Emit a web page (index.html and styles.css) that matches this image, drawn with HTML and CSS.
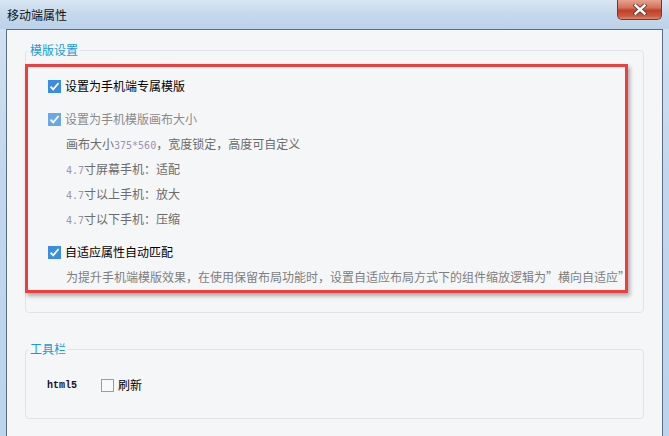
FILE: index.html
```html
<!DOCTYPE html>
<html lang="zh-CN">
<head>
<meta charset="utf-8">
<title>移动端属性</title>
<link rel="stylesheet" href="styles.css">
</head>
<body>
<div class="window">
  <div class="titlebar">
    <span class="title">移动端属性</span>
    <span class="close">
      <svg width="14" height="11" viewBox="0 0 14 11">
        <path d="M2.5 1.5 L11.5 9.5 M11.5 1.5 L2.5 9.5" stroke="#5a3a36" stroke-width="4.2" stroke-linecap="square" fill="none"/>
        <path d="M2.5 1.5 L11.5 9.5 M11.5 1.5 L2.5 9.5" stroke="#ffffff" stroke-width="2.4" stroke-linecap="square" fill="none"/>
      </svg>
    </span>
  </div>
  <div class="client">
    <div class="group g1">
      <div class="legend">模版设置</div>
      <div class="row first">
        <span class="cb on"><svg width="13" height="13" viewBox="0 0 13 13"><path d="M2.6 6.6 L5.2 9.4 L10.6 3" stroke="#fff" stroke-width="1.8" fill="none"/></svg></span>
        <span class="lbl">设置为手机端专属模版</span>
      </div>
      <div class="row gap dim">
        <span class="cb on soft"><svg width="13" height="13" viewBox="0 0 13 13"><path d="M2.6 6.6 L5.2 9.4 L10.6 3" stroke="#fff" stroke-width="1.8" fill="none"/></svg></span>
        <span class="lbl">设置为手机模版画布大小</span>
      </div>
      <div class="desc">画布大小<span class="num">375*560</span>，宽度锁定，高度可自定义</div>
      <div class="desc"><span class="num">4.7</span>寸屏幕手机：适配</div>
      <div class="desc"><span class="num">4.7</span>寸以上手机：放大</div>
      <div class="desc"><span class="num">4.7</span>寸以下手机：压缩</div>
      <div class="row gap">
        <span class="cb on"><svg width="13" height="13" viewBox="0 0 13 13"><path d="M2.6 6.6 L5.2 9.4 L10.6 3" stroke="#fff" stroke-width="1.8" fill="none"/></svg></span>
        <span class="lbl">自适应属性自动匹配</span>
      </div>
      <div class="desc light">为提升手机端模版效果，在使用保留布局功能时，设置自适应布局方式下的组件缩放逻辑为”横向自适应”</div>
    </div>
    <div class="group g2">
      <div class="legend">工具栏</div>
      <div class="toolrow">
        <span class="mono">html5</span>
        <span class="cb off"></span>
        <span class="lbl">刷新</span>
      </div>
    </div>
  </div>
  <div class="highlight"></div>
</div>
</body>
</html>
```
FILE: styles.css
```css
html, body {
  margin: 0;
  padding: 0;
  width: 669px;
  height: 436px;
  overflow: hidden;
}
body {
  font-family: "Noto Sans CJK SC", "Noto Sans", sans-serif;
  font-size: 12px;
  color: #000;
}
.window {
  position: relative;
  width: 669px;
  height: 436px;
  background: linear-gradient(180deg, #d3e2f2 0%, #c2d7ee 40%, #bcd4ee 100%);
  display: flex;
  flex-direction: column;
}
.titlebar {
  height: 29px;
  flex: none;
  display: flex;
  justify-content: space-between;
  align-items: flex-start;
  background: linear-gradient(180deg, #d9e6f3 0%, #c6d9ec 45%, #bcd2ea 100%);
}
.title {
  margin: 7px 0 0 7px;
  line-height: 16px;
  font-size: 12px;
  color: #111;
}
.close {
  margin-right: 7px;
  width: 45px;
  height: 20px;
  box-sizing: border-box;
  border: 1px solid #6e3a32;
  border-top: none;
  border-radius: 0 0 5px 5px;
  background: linear-gradient(180deg, #e6a28f 0%, #d4735b 40%, #c0402a 55%, #cf5a3f 85%, #e08a6c 100%);
  display: flex;
  align-items: center;
  justify-content: center;
}
.close svg { display: block; margin-top: -1px; }
.client {
  flex: 1;
  margin: 0 6px;
  border: 1px solid #5b6d82;
  border-bottom: none;
  background: #f5f6f8;
  padding: 0 18px;
}
.group {
  border: 1px solid #e2e3e6;
  border-radius: 4px;
}
.g1 {
  margin-top: 20px;
  padding: 0 0 23px 22px;
}
.g2 {
  margin-top: 36px;
  padding: 0 0 21px 21px;
}
.legend {
  display: table;
  margin: -8px 0 0 -20px;
  padding: 0 2px;
  line-height: 14px;
  background: #f5f6f8;
  color: #1b9ad8;
}
.g2 .legend { margin-left: -19px; }
.row {
  display: flex;
  align-items: center;
  height: 24px;
}
.row.first { margin-top: 17px; }
.row.gap { margin-top: 9px; }
.cb {
  flex: none;
  width: 13px;
  height: 13px;
  box-sizing: border-box;
  margin-right: 4px;
}
.cb svg { display: block; }
.cb.on { background: #3a8de0; }
.cb.on.soft { background: #68a8e6; }
.cb.off {
  border: 1px solid #9c9c9c;
  background: #f9f9f9;
}
.lbl { line-height: 24px; white-space: nowrap; }
.dim .lbl { color: #8a8a8a; }
.desc {
  margin-left: 18px;
  height: 25px;
  line-height: 25px;
  color: #6b6b6b;
  white-space: nowrap;
}
.desc.light { color: #7e7e7e; }
.num {
  font-family: "DejaVu Sans Mono", "Liberation Mono", monospace;
  font-size: 10px;
  color: #9a93b2;
}
.toolrow {
  margin-top: 17px;
  height: 24px;
  display: flex;
  align-items: center;
}
.mono {
  font-family: "Liberation Mono", "DejaVu Sans Mono", monospace;
  font-size: 10px;
  font-weight: bold;
  color: #15132a;
  width: 54px;
}
.highlight {
  position: absolute;
  left: 25px;
  top: 64px;
  width: 603px;
  height: 229px;
  box-sizing: border-box;
  border: 3px solid #ef3e3e;
  box-shadow: 2px 3px 4px rgba(0, 0, 0, 0.3);
  pointer-events: none;
}
```
